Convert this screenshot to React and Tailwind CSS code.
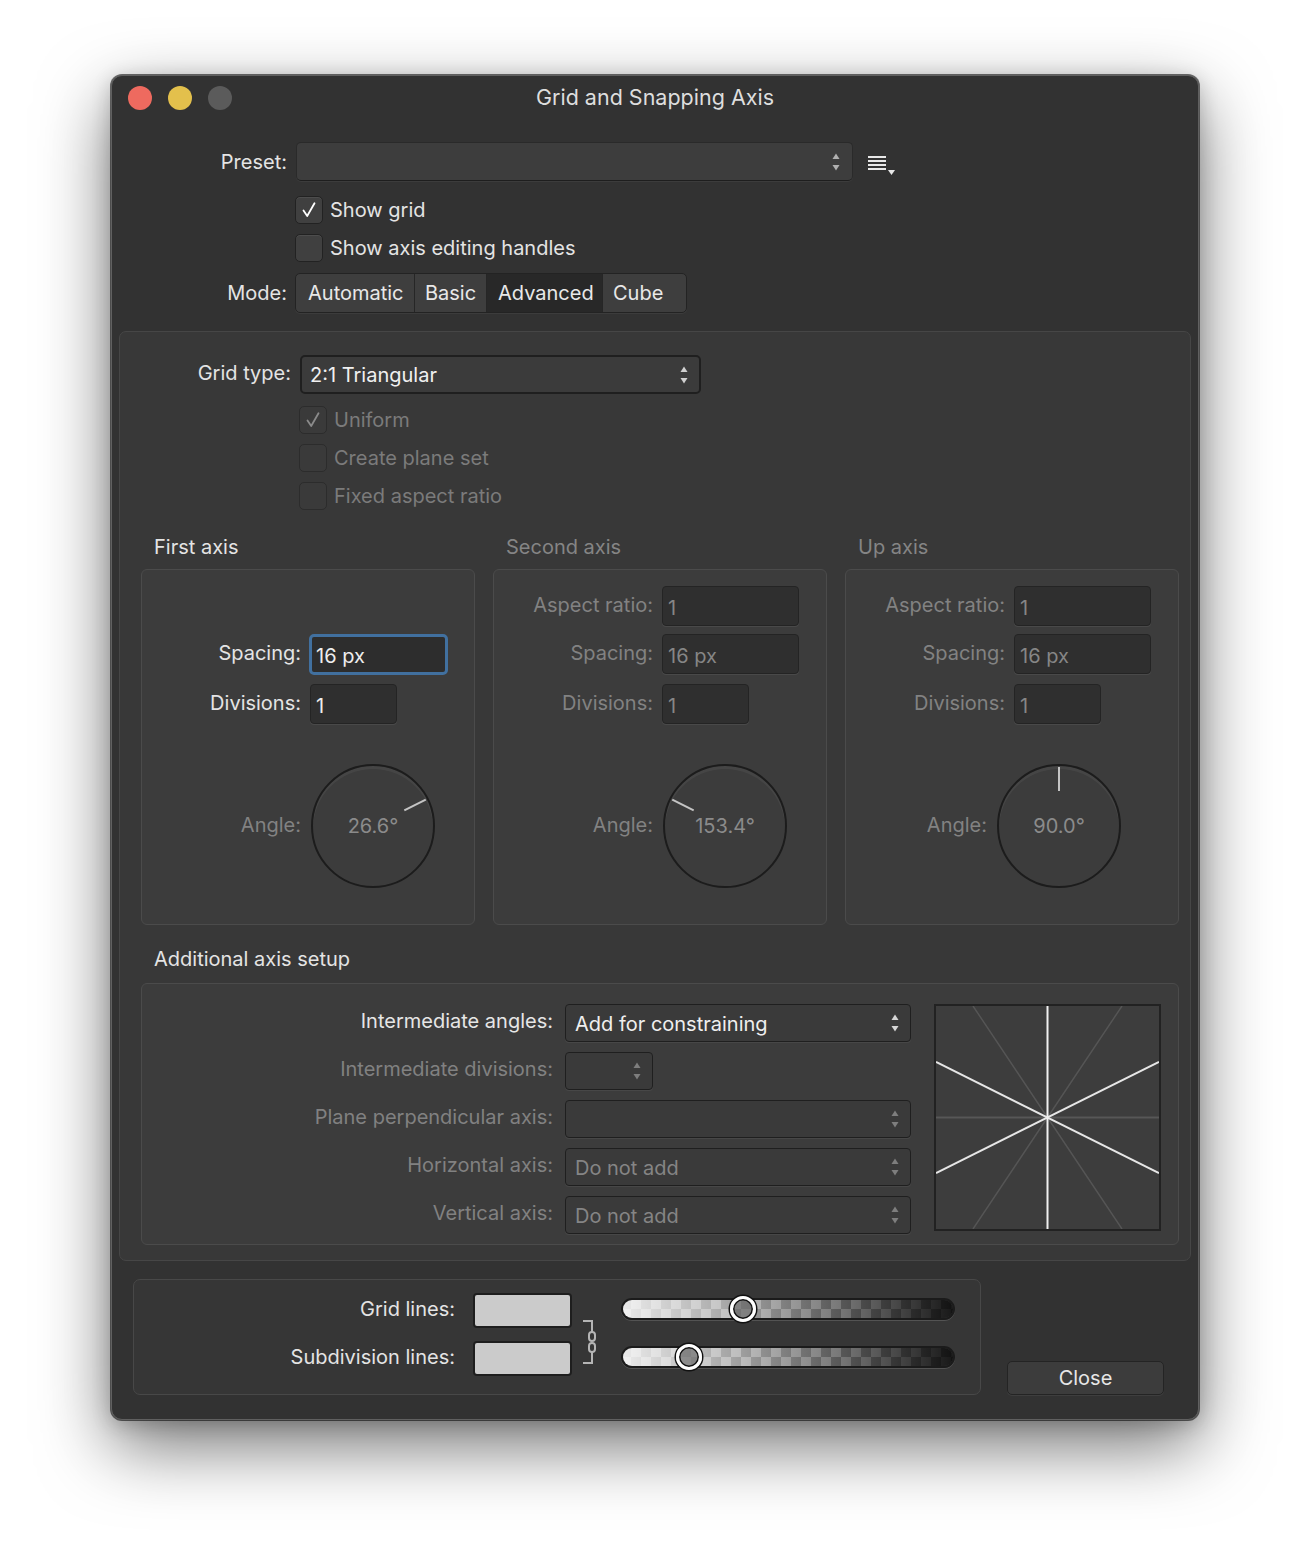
import React from "react";

function UpDown({ color = "#b8b8b8" }) {
  return (
    <svg width="8" height="20" viewBox="0 0 8 20" className="shrink-0">
      <path d="M4 1.5 L7.5 7 L0.5 7 Z" fill={color} />
      <path d="M0.5 13 L7.5 13 L4 18.5 Z" fill={color} />
    </svg>
  );
}

function Check({ checked, disabled, label }) {
  return (
    <div className="flex items-center h-[28px]">
      <div
        className={`w-[28px] h-[28px] rounded-[5px] flex items-center justify-center border ${
          disabled
            ? "bg-[#3a3a3a] border-[#2c2c2c]"
            : "bg-[#404040] border-[#222222] shadow-[inset_0_1px_0_rgba(255,255,255,0.07)]"
        }`}
      >
        {checked && (
          <svg width="20" height="20" viewBox="0 0 20 20">
            <path
              d="M4.5 10.5 L8.2 16 L15.5 3.2"
              fill="none"
              stroke={disabled ? "#8a8a8a" : "#ffffff"}
              strokeWidth="1.8"
              strokeLinecap="round"
              strokeLinejoin="round"
            />
          </svg>
        )}
      </div>
      <span
        className={`ml-[7px] text-[20px] leading-none ${
          disabled ? "text-[#7b7b7b]" : "text-[#e4e4e4]"
        }`}
      >
        {label}
      </span>
    </div>
  );
}

function Dial({ angle }) {
  const rad = (angle * Math.PI) / 180;
  const c = 62;
  const x1 = c + 35 * Math.cos(rad);
  const y1 = c - 35 * Math.sin(rad);
  const x2 = c + 59 * Math.cos(rad);
  const y2 = c - 59 * Math.sin(rad);
  return (
    <div className="relative w-[124px] h-[124px] rounded-full border-2 border-[#1c1c1c] bg-[#3c3c3c] shadow-[inset_0_3px_0_rgba(255,255,255,0.05)] flex items-center justify-center shrink-0">
      <svg
        className="absolute inset-[-2px]"
        width="124"
        height="124"
        viewBox="0 0 124 124"
      >
        <line x1={x1} y1={y1} x2={x2} y2={y2} stroke="#c4c4c4" strokeWidth="2" />
      </svg>
      <span className="text-[20px] leading-none text-[#8b8b8b]">
        {angle.toFixed(1)}°
      </span>
    </div>
  );
}

function Field({ label, value, active, wide, focused }) {
  const labelCls = active ? "text-[#e4e4e4]" : "text-[#828282]";
  const valCls = active ? "text-[#ededed]" : "text-[#868686]";
  return (
    <div className="flex items-center">
      <div className={`w-[159px] text-right text-[20px] leading-none pb-[3px] ${labelCls}`}>
        {label}
      </div>
      {focused ? (
        <div className="ml-[8px] w-[139px] h-[41px] rounded-[5px] border-[3px] border-[#41709f] bg-[#2d2d2d] flex items-center pl-[4px] pt-[3px]">
          <span className={`text-[20px] leading-none ${valCls}`}>{value}</span>
        </div>
      ) : (
        <div
          className={`ml-[9px] ${
            wide ? "w-[137px]" : "w-[87px]"
          } h-[40px] rounded-[4px] border border-[#242424] bg-[#2f2f2f] shadow-[0_1px_0_rgba(255,255,255,0.07)] flex items-center pl-[5px] pt-[4px]`}
        >
          <span className={`text-[20px] leading-none ${valCls}`}>{value}</span>
        </div>
      )}
    </div>
  );
}

function AxisBox({ title, active, aspect, angle, angleCol }) {
  return (
    <div className="flex flex-col w-[334px]">
      <div
        className={`ml-[13px] h-[24px] text-[20px] leading-[24px] ${
          active ? "text-[#e4e4e4]" : "text-[#858585]"
        }`}
      >
        {title}
      </div>
      <div className="mt-[10px] h-[356px] rounded-[6px] border border-[#4b4b4b] bg-[#3c3c3c] flex flex-col pt-[16px]">
        <div className={aspect ? "" : "invisible"}>
          <Field label="Aspect ratio:" value="1" active={active} wide />
        </div>
        <div className="mt-[8px]">
          <Field label="Spacing:" value="16 px" active={active} wide focused={active} />
        </div>
        <div className={active ? "mt-[9px]" : "mt-[10px]"}>
          <Field label="Divisions:" value="1" active={active} />
        </div>
        <div className="mt-[40px] flex items-center">
          <div
            className={`${
              angleCol === "narrow" ? "w-[141px]" : "w-[159px]"
            } text-right text-[20px] leading-none pb-[2px] text-[#828282]`}
          >
            Angle:
          </div>
          <div className="ml-[10px]">
            <Dial angle={angle} />
          </div>
        </div>
      </div>
    </div>
  );
}

function SelectRow({ label, labelActive, text, textActive, small, empty }) {
  return (
    <div className="flex items-center h-[38px]">
      <div
        className={`w-[411px] text-right text-[20px] leading-none pb-[4px] ${
          labelActive ? "text-[#e6e6e6]" : "text-[#818181]"
        }`}
      >
        {label}
      </div>
      <div
        className={`ml-[12px] ${
          small ? "w-[88px]" : "w-[346px]"
        } h-[38px] rounded-[4px] border border-[#1f1f1f] bg-[#3a3a3a] shadow-[0_1px_0_rgba(255,255,255,0.06)] flex items-center justify-between pl-[9px] pr-[11px]`}
      >
        <span
          className={`text-[20px] leading-none pt-[2px] ${
            textActive ? "text-[#efefef]" : "text-[#858585]"
          }`}
        >
          {empty ? "" : text}
        </span>
        <UpDown color={textActive ? "#d6d6d6" : "#7e7e7e"} />
      </div>
    </div>
  );
}

function Slider({ pos }) {
  return (
    <div className="relative w-[334px] h-[22px] rounded-full border-2 border-[#1b1b1b] shadow-[0_1px_0_rgba(255,255,255,0.15)]">
      <div className="absolute inset-0 rounded-full overflow-hidden [background-image:linear-gradient(to_right,rgba(255,255,255,0.85),rgba(255,255,255,0.3)_35%,rgba(0,0,0,0.25)_65%,rgba(0,0,0,0.85)),repeating-conic-gradient(#a2a2a2_0%_25%,#777777_0%_50%)] [background-size:100%_100%,20px_20px] [background-position:0_0,-2px_-1px]" />
      <div
        className="absolute top-1/2 w-[26px] h-[26px] -translate-x-1/2 -translate-y-1/2 rounded-full border-[3px] border-white bg-[#5a5a5a]/60 shadow-[0_0_0_1.5px_#111,inset_0_0_0_1.5px_#111]"
        style={{ left: pos }}
      />
    </div>
  );
}

function Chain() {
  return (
    <svg width="16" height="46" viewBox="0 0 16 46">
      <path d="M1 2 H10 V13" fill="none" stroke="#b5b5b5" strokeWidth="2" />
      <path d="M1 44 H10 V33" fill="none" stroke="#b5b5b5" strokeWidth="2" />
      <rect x="7" y="13" width="6" height="9" rx="3" fill="none" stroke="#b5b5b5" strokeWidth="2" />
      <rect x="7" y="24" width="6" height="9" rx="3" fill="none" stroke="#b5b5b5" strokeWidth="2" />
    </svg>
  );
}

export default function App() {
  return (
    <div className="w-[1310px] h-[1568px] bg-white pt-[75px] pl-[111px] [font-family:Inter,'Noto_Sans',sans-serif] text-[#e3e3e3]">
      <div className="w-[1088px] h-[1345px] bg-[#323232] rounded-[11px] border border-[#606060] shadow-[0_0_0_1px_rgba(0,0,0,0.55),0_26px_70px_rgba(0,0,0,0.55),0_4px_20px_rgba(0,0,0,0.2)] flex flex-col">
        {/* Title bar */}
        <div className="relative h-[44px] flex items-center justify-center shrink-0">
          <div className="absolute left-[16px] top-[10px] flex gap-[16px]">
            <div className="w-[24px] h-[24px] rounded-full bg-[#ee6a5f]" />
            <div className="w-[24px] h-[24px] rounded-full bg-[#e3c04c]" />
            <div className="w-[24px] h-[24px] rounded-full bg-[#5b5b5b]" />
          </div>
          <div className="text-[21.5px] leading-none text-[#dedede]">Grid and Snapping Axis</div>
        </div>

        {/* Preset */}
        <div className="mt-[22px] flex items-center h-[39px]">
          <div className="w-[175px] text-right text-[20px] leading-none text-[#e4e4e4]">Preset:</div>
          <div className="ml-[9px] w-[557px] h-[39px] rounded-[5px] bg-[#3d3d3d] border border-[#2a2a2a] border-b-[#1e1e1e] shadow-[0_1px_0_rgba(255,255,255,0.05)] flex items-center justify-end pr-[12px]">
            <UpDown color="#b0b0b0" />
          </div>
          <svg className="ml-[14px] mt-[6px]" width="30" height="22" viewBox="0 0 30 22">
            <path d="M1 3 H19 M1 7 H19 M1 11 H19 M1 15 H19" stroke="#e8e8e8" strokeWidth="1.8" />
            <path d="M21 16 H28 L24.5 21 Z" fill="#e8e8e8" />
          </svg>
        </div>

        {/* Checkboxes */}
        <div className="mt-[15px] ml-[183px]">
          <Check checked label="Show grid" />
        </div>
        <div className="mt-[10px] ml-[183px]">
          <Check label="Show axis editing handles" />
        </div>

        {/* Mode */}
        <div className="mt-[11px] flex items-center h-[40px]">
          <div className="w-[175px] text-right text-[20px] leading-none text-[#e4e4e4]">Mode:</div>
          <div className="ml-[8px] flex h-[40px] rounded-[5px] border border-[#232323] bg-[#3e3e3e] overflow-hidden shadow-[0_1px_0_rgba(255,255,255,0.05)]">
            <div className="w-[119px] flex items-center pl-[12px] text-[20px] leading-none text-[#e8e8e8] border-r border-[#262626]">Automatic</div>
            <div className="w-[72px] flex items-center pl-[10px] text-[20px] leading-none text-[#e8e8e8] border-r border-[#262626]">Basic</div>
            <div className="w-[116px] flex items-center pl-[11px] text-[20px] leading-none text-[#e8e8e8] bg-[#282828] border-r border-[#262626]">Advanced</div>
            <div className="w-[83px] flex items-center pl-[10px] text-[20px] leading-none text-[#e8e8e8]">Cube</div>
          </div>
        </div>

        {/* Inner panel */}
        <div className="mt-[18px] ml-[7px] w-[1072px] h-[930px] rounded-[7px] border border-[#464646] bg-[#383838] flex flex-col pt-[23px]">
          <div className="flex items-center h-[39px]">
            <div className="w-[171px] text-right text-[20px] leading-none pb-[4px] text-[#e4e4e4]">Grid type:</div>
            <div className="ml-[9px] w-[401px] h-[39px] rounded-[5px] border-2 border-[#1f1f1f] bg-[#3b3b3b] flex items-center justify-between pl-[8px] pr-[11px]">
              <span className="text-[20px] leading-none text-[#f0f0f0] pt-[1px]">2:1 Triangular</span>
              <UpDown color="#d0d0d0" />
            </div>
          </div>
          <div className="mt-[12px] ml-[179px] flex flex-col gap-[10px]">
            <Check checked disabled label="Uniform" />
            <Check disabled label="Create plane set" />
            <Check disabled label="Fixed aspect ratio" />
          </div>

          <div className="mt-[25px] ml-[21px] flex gap-[18px]">
            <AxisBox title="First axis" active angle={26.6} />
            <AxisBox title="Second axis" aspect angle={153.4} />
            <AxisBox title="Up axis" aspect angle={90.0} angleCol="narrow" />
          </div>

          <div className="mt-[22px] ml-[34px] h-[24px] text-[20px] leading-[24px] text-[#e4e4e4]">
            Additional axis setup
          </div>
          <div className="mt-[12px] ml-[21px] w-[1038px] h-[262px] rounded-[6px] border border-[#4b4b4b] bg-[#3c3c3c] flex pt-[20px]">
            <div className="flex flex-col gap-[10px]">
              <SelectRow label="Intermediate angles:" labelActive text="Add for constraining" textActive />
              <SelectRow label="Intermediate divisions:" small empty />
              <SelectRow label="Plane perpendicular axis:" empty />
              <SelectRow label="Horizontal axis:" text="Do not add" />
              <SelectRow label="Vertical axis:" text="Do not add" />
            </div>
            <div className="ml-[23px] w-[227px] h-[227px] border-2 border-[#222222] bg-[#3d3d3d] shrink-0">
              <svg width="223" height="223" viewBox="0 0 223 223">
                <line x1="0" y1="111.5" x2="223" y2="111.5" stroke="#575757" strokeWidth="2" />
                <line x1="37" y1="0" x2="186" y2="223" stroke="#555555" strokeWidth="1.5" />
                <line x1="186" y1="0" x2="37" y2="223" stroke="#555555" strokeWidth="1.5" />
                <line x1="0" y1="56" x2="223" y2="167" stroke="#e6e6e6" strokeWidth="2" />
                <line x1="0" y1="167" x2="223" y2="56" stroke="#e6e6e6" strokeWidth="2" />
                <line x1="111.5" y1="0" x2="111.5" y2="223" stroke="#f0f0f0" strokeWidth="2" />
              </svg>
            </div>
          </div>
        </div>

        {/* Bottom */}
        <div className="mt-[18px] ml-[21px] flex items-end">
          <div className="w-[848px] h-[116px] rounded-[7px] border border-[#484848] bg-[#363636] flex items-start pt-[13px]">
            <div className="flex flex-col gap-[13px]">
              <div className="h-[35px] w-[321px] flex items-center justify-end text-[20px] leading-none pb-[3px] text-[#e4e4e4]">Grid lines:</div>
              <div className="h-[35px] w-[321px] flex items-center justify-end text-[20px] leading-none pb-[3px] text-[#e4e4e4]">Subdivision lines:</div>
            </div>
            <div className="ml-[18px] flex flex-col gap-[13px]">
              <div className="w-[99px] h-[35px] rounded-[4px] border-2 border-[#1e1e1e] bg-[#cbcbcb]" />
              <div className="w-[99px] h-[35px] rounded-[4px] border-2 border-[#1e1e1e] bg-[#cbcbcb]" />
            </div>
            <div className="ml-[10px] mt-[26px]">
              <Chain />
            </div>
            <div className="ml-[23px] mt-[5px] flex flex-col gap-[26px]">
              <Slider pos={120} />
              <Slider pos={66} />
            </div>
          </div>
          <div className="ml-[26px] w-[157px] h-[34px] rounded-[5px] border border-[#242424] bg-[#3c3c3c] shadow-[0_1px_0_rgba(255,255,255,0.06)] flex items-center justify-center text-[20px] leading-none pb-[1px] text-[#e6e6e6]">
            Close
          </div>
        </div>
      </div>
    </div>
  );
}
